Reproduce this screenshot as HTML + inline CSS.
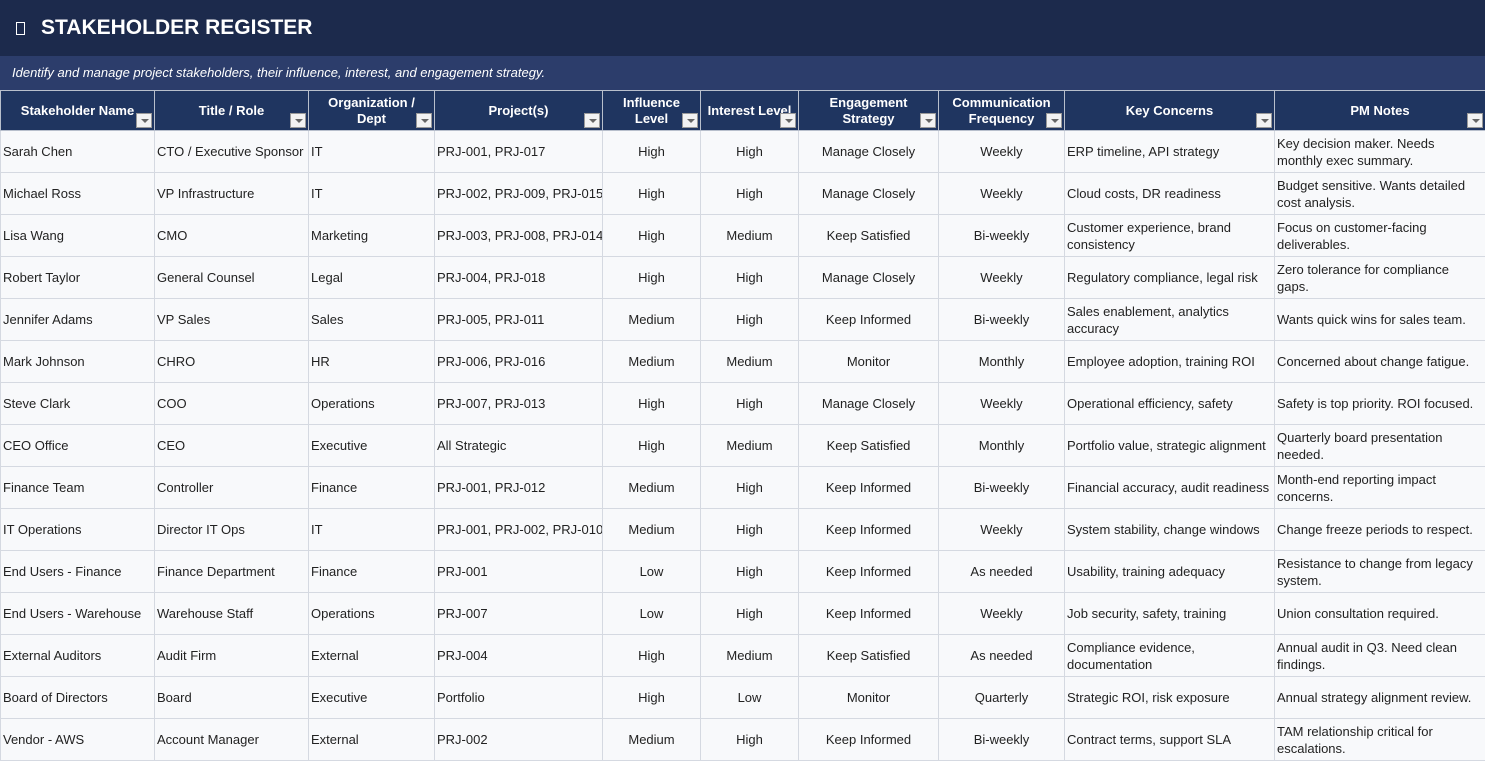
<!DOCTYPE html>
<html><head><meta charset="utf-8"><style>
*{margin:0;padding:0;box-sizing:border-box}
body{width:1485px;height:761px;overflow:hidden;background:#fff;font-family:"Liberation Sans",Arial,sans-serif;}
.title{height:56px;background:#1c2a4c;color:#fff;font-weight:bold;font-size:21px;line-height:56px;padding-left:16px;}
.title .box{display:inline-block;width:9px;height:13px;border:1px solid #fff;margin-right:16px;vertical-align:-1px}
.sub{height:34px;background:#2c3d6b;color:#fff;font-style:italic;font-size:13px;line-height:34px;padding-left:12px;}
table{border-collapse:collapse;table-layout:fixed;width:1485px;}
th{background:#1f3560;color:#fff;font-size:13px;font-weight:bold;height:40px;border:1px solid #b8bfcc;position:relative;line-height:16px;padding:0 2px 0 2px}
th i{position:absolute;right:2px;bottom:2px;width:16px;height:15px;background:#f2f2f2;border:1px solid #999}
th i:after{content:"";position:absolute;left:4px;top:5px;border-left:4px solid transparent;border-right:4px solid transparent;border-top:4px solid #666}
td{height:42px;font-size:13px;color:#222;border:1px solid #d5d9e1;padding:0 2px;line-height:17px;background:#f8f9fb;overflow:hidden;white-space:nowrap}
td.w{white-space:normal}
td.c{text-align:center}
</style></head><body>
<div class="title"><span class="box"></span>STAKEHOLDER REGISTER</div>
<div class="sub">Identify and manage project stakeholders, their influence, interest, and engagement strategy.</div>
<table>
<colgroup><col style="width:154px"><col style="width:154px"><col style="width:126px"><col style="width:168px"><col style="width:98px"><col style="width:98px"><col style="width:140px"><col style="width:126px"><col style="width:210px"><col style="width:211px"></colgroup>
<tr><th>Stakeholder Name<i></i></th><th>Title / Role<i></i></th><th style="padding:0 14px">Organization / Dept<i></i></th><th>Project(s)<i></i></th><th style="padding:0 14px">Influence Level<i></i></th><th style="white-space:nowrap">Interest Level<i></i></th><th style="padding:0 14px">Engagement Strategy<i></i></th><th>Communication Frequency<i></i></th><th>Key Concerns<i></i></th><th>PM Notes<i></i></th></tr>
<tr><td>Sarah Chen</td><td>CTO / Executive Sponsor</td><td>IT</td><td>PRJ-001, PRJ-017</td><td class="c">High</td><td class="c">High</td><td class="c">Manage Closely</td><td class="c">Weekly</td><td class="w">ERP timeline, API strategy</td><td class="w">Key decision maker. Needs monthly exec summary.</td></tr>
<tr><td>Michael Ross</td><td>VP Infrastructure</td><td>IT</td><td>PRJ-002, PRJ-009, PRJ-015</td><td class="c">High</td><td class="c">High</td><td class="c">Manage Closely</td><td class="c">Weekly</td><td class="w">Cloud costs, DR readiness</td><td class="w">Budget sensitive. Wants detailed cost analysis.</td></tr>
<tr><td>Lisa Wang</td><td>CMO</td><td>Marketing</td><td>PRJ-003, PRJ-008, PRJ-014</td><td class="c">High</td><td class="c">Medium</td><td class="c">Keep Satisfied</td><td class="c">Bi-weekly</td><td class="w">Customer experience, brand consistency</td><td class="w">Focus on customer-facing deliverables.</td></tr>
<tr><td>Robert Taylor</td><td>General Counsel</td><td>Legal</td><td>PRJ-004, PRJ-018</td><td class="c">High</td><td class="c">High</td><td class="c">Manage Closely</td><td class="c">Weekly</td><td class="w">Regulatory compliance, legal risk</td><td class="w">Zero tolerance for compliance gaps.</td></tr>
<tr><td>Jennifer Adams</td><td>VP Sales</td><td>Sales</td><td>PRJ-005, PRJ-011</td><td class="c">Medium</td><td class="c">High</td><td class="c">Keep Informed</td><td class="c">Bi-weekly</td><td class="w">Sales enablement, analytics accuracy</td><td class="w">Wants quick wins for sales team.</td></tr>
<tr><td>Mark Johnson</td><td>CHRO</td><td>HR</td><td>PRJ-006, PRJ-016</td><td class="c">Medium</td><td class="c">Medium</td><td class="c">Monitor</td><td class="c">Monthly</td><td class="w">Employee adoption, training ROI</td><td class="w">Concerned about change fatigue.</td></tr>
<tr><td>Steve Clark</td><td>COO</td><td>Operations</td><td>PRJ-007, PRJ-013</td><td class="c">High</td><td class="c">High</td><td class="c">Manage Closely</td><td class="c">Weekly</td><td class="w">Operational efficiency, safety</td><td class="w">Safety is top priority. ROI focused.</td></tr>
<tr><td>CEO Office</td><td>CEO</td><td>Executive</td><td>All Strategic</td><td class="c">High</td><td class="c">Medium</td><td class="c">Keep Satisfied</td><td class="c">Monthly</td><td class="w">Portfolio value, strategic alignment</td><td class="w">Quarterly board presentation needed.</td></tr>
<tr><td>Finance Team</td><td>Controller</td><td>Finance</td><td>PRJ-001, PRJ-012</td><td class="c">Medium</td><td class="c">High</td><td class="c">Keep Informed</td><td class="c">Bi-weekly</td><td class="w">Financial accuracy, audit readiness</td><td class="w">Month-end reporting impact concerns.</td></tr>
<tr><td>IT Operations</td><td>Director IT Ops</td><td>IT</td><td>PRJ-001, PRJ-002, PRJ-010</td><td class="c">Medium</td><td class="c">High</td><td class="c">Keep Informed</td><td class="c">Weekly</td><td class="w">System stability, change windows</td><td class="w">Change freeze periods to respect.</td></tr>
<tr><td>End Users - Finance</td><td>Finance Department</td><td>Finance</td><td>PRJ-001</td><td class="c">Low</td><td class="c">High</td><td class="c">Keep Informed</td><td class="c">As needed</td><td class="w">Usability, training adequacy</td><td class="w">Resistance to change from legacy system.</td></tr>
<tr><td>End Users - Warehouse</td><td>Warehouse Staff</td><td>Operations</td><td>PRJ-007</td><td class="c">Low</td><td class="c">High</td><td class="c">Keep Informed</td><td class="c">Weekly</td><td class="w">Job security, safety, training</td><td class="w">Union consultation required.</td></tr>
<tr><td>External Auditors</td><td>Audit Firm</td><td>External</td><td>PRJ-004</td><td class="c">High</td><td class="c">Medium</td><td class="c">Keep Satisfied</td><td class="c">As needed</td><td class="w">Compliance evidence, documentation</td><td class="w">Annual audit in Q3. Need clean findings.</td></tr>
<tr><td>Board of Directors</td><td>Board</td><td>Executive</td><td>Portfolio</td><td class="c">High</td><td class="c">Low</td><td class="c">Monitor</td><td class="c">Quarterly</td><td class="w">Strategic ROI, risk exposure</td><td class="w">Annual strategy alignment review.</td></tr>
<tr><td>Vendor - AWS</td><td>Account Manager</td><td>External</td><td>PRJ-002</td><td class="c">Medium</td><td class="c">High</td><td class="c">Keep Informed</td><td class="c">Bi-weekly</td><td class="w">Contract terms, support SLA</td><td class="w">TAM relationship critical for escalations.</td></tr>
</table>
</body></html>
